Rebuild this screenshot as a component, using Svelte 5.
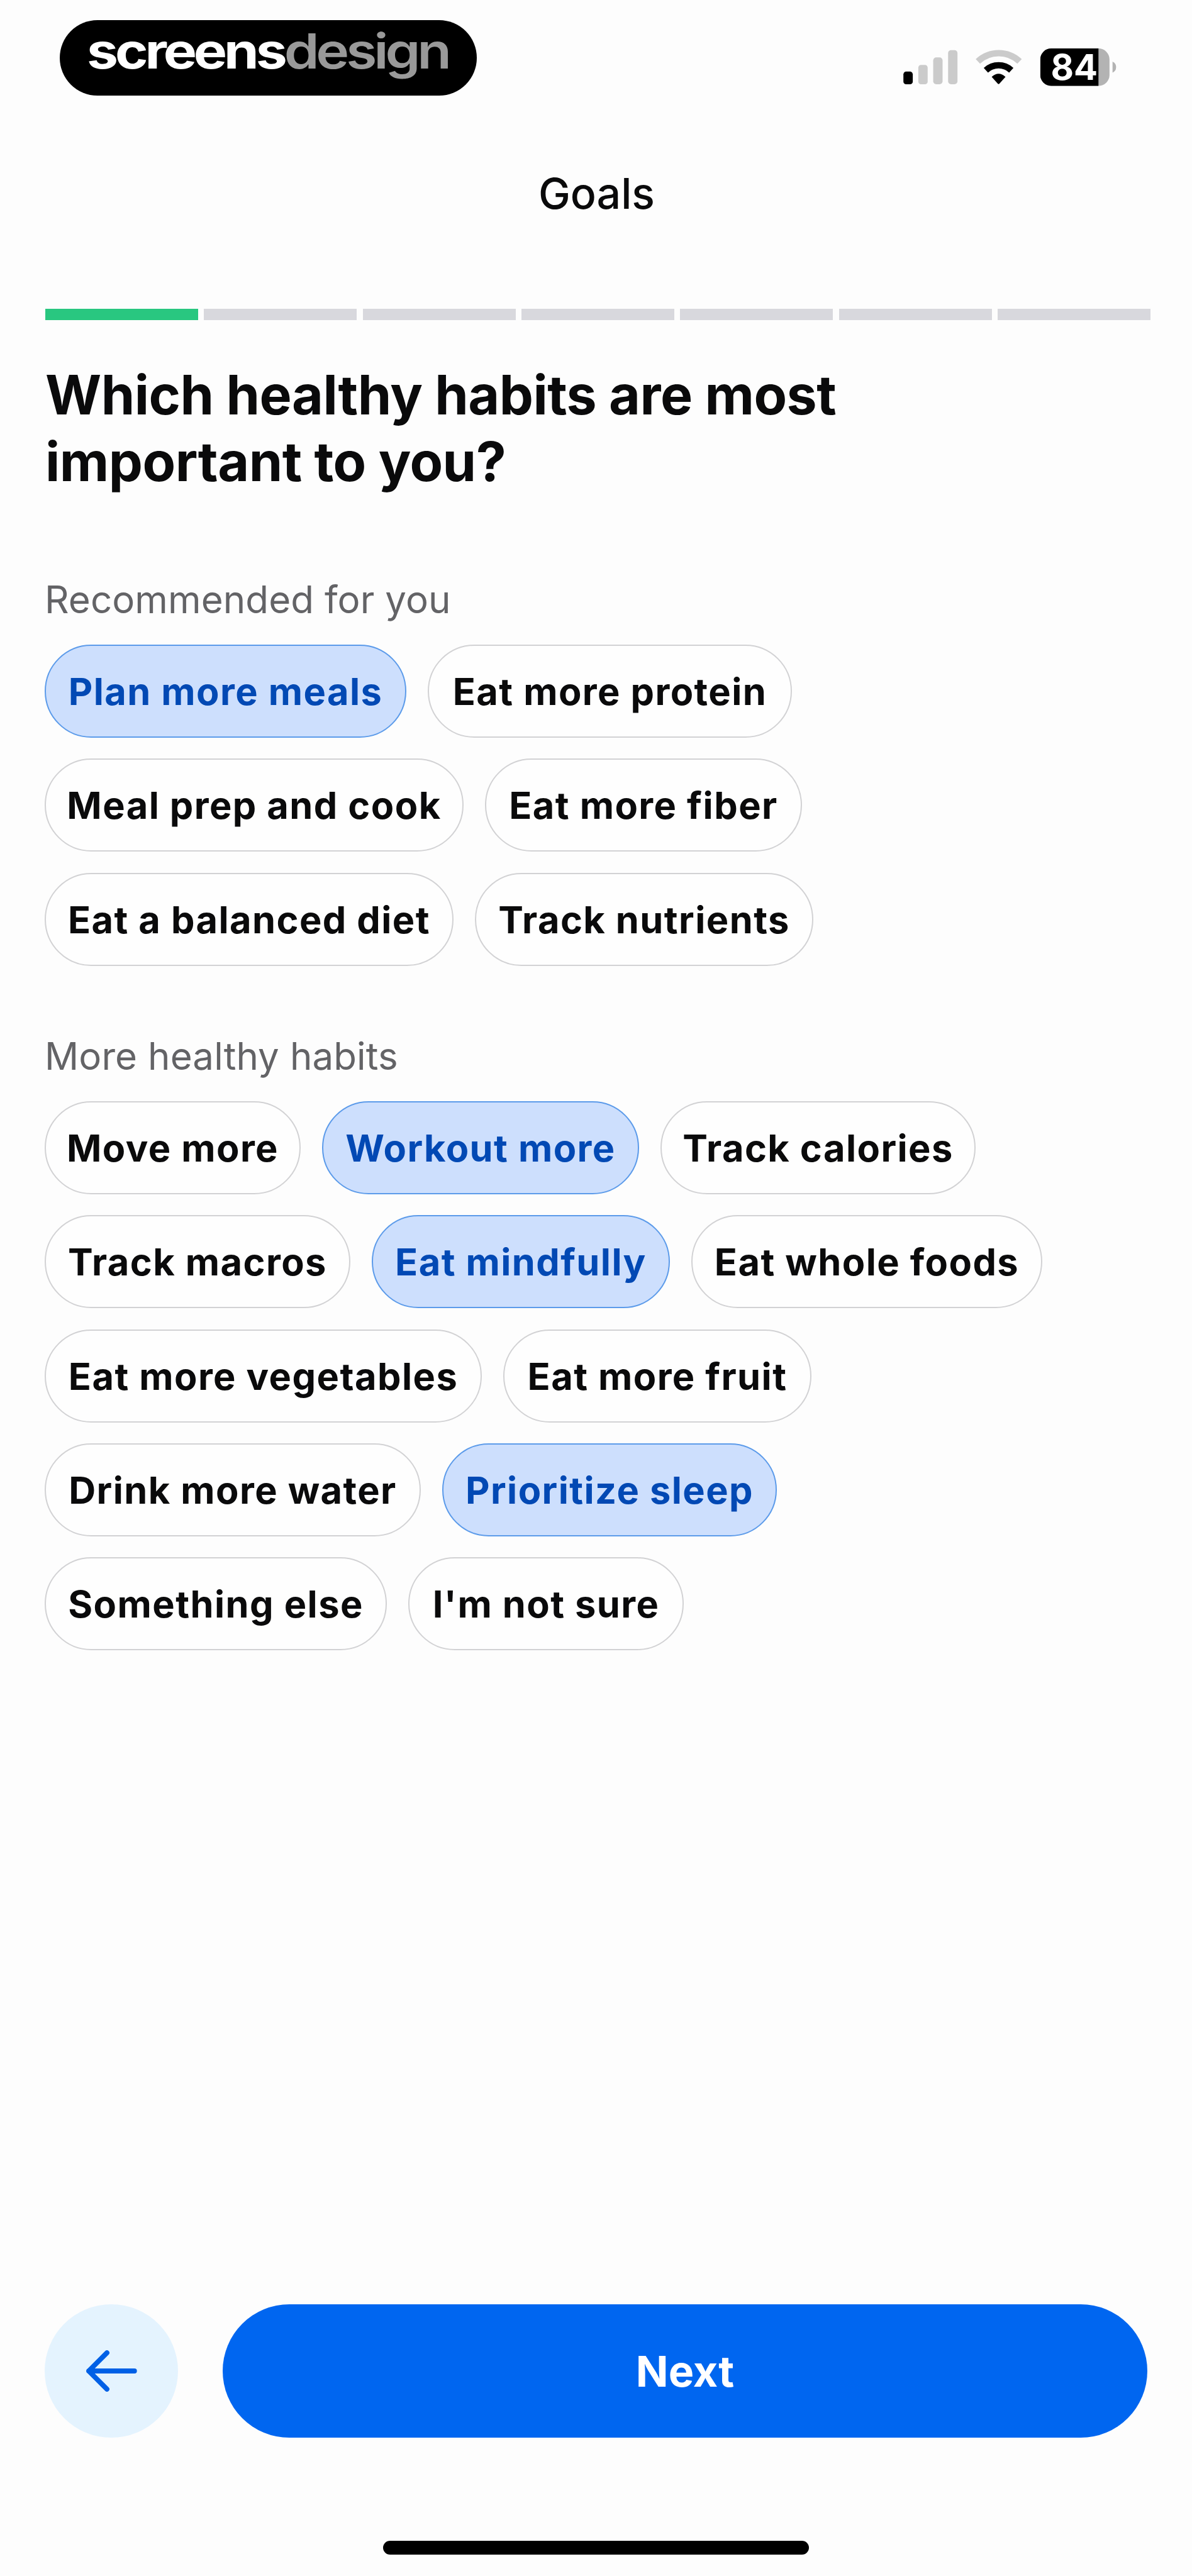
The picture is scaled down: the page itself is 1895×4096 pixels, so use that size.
<script>
  const steps = [true, false, false, false, false, false, false];

  const sections = [
    {
      title: 'Recommended for you',
      rows: [
        [{ label: 'Plan more meals', width: 575, on: true }, { label: 'Eat more protein', width: 579 }],
        [{ label: 'Meal prep and cook', width: 666 }, { label: 'Eat more fiber', width: 504 }],
        [{ label: 'Eat a balanced diet', width: 650 }, { label: 'Track nutrients', width: 538 }]
      ]
    },
    {
      title: 'More healthy habits',
      rows: [
        [
          { label: 'Move more', width: 407 },
          { label: 'Workout more', width: 504, on: true },
          { label: 'Track calories', width: 501 }
        ],
        [
          { label: 'Track macros', width: 486 },
          { label: 'Eat mindfully', width: 474, on: true },
          { label: 'Eat whole foods', width: 558 }
        ],
        [{ label: 'Eat more vegetables', width: 695 }, { label: 'Eat more fruit', width: 490 }],
        [{ label: 'Drink more water', width: 598 }, { label: 'Prioritize sleep', width: 532, on: true }],
        [{ label: 'Something else', width: 544 }, { label: "I'm not sure", width: 438 }]
      ]
    }
  ];
</script>

<main class="screen">
  <header class="status">
    <div class="brand"><div class="wordmark">screens<span class="dim">design</span></div></div>
    <svg class="icons" viewBox="1630 80 400 84" aria-hidden="true">
      <rect x="1637" y="130" width="17" height="23" rx="5" fill="#000" />
      <g fill="#cbcbcb">
        <rect x="1664" y="118" width="17" height="35" rx="5" />
        <rect x="1691" y="104.3" width="17" height="48.7" rx="5.5" />
        <rect x="1718" y="91" width="17" height="62" rx="5.5" />
      </g>
      <path d="M1772 111.5 A55 55 0 0 1 1847.5 111.5" fill="none" stroke="#cbcbcb" stroke-width="11.5" />
      <path d="M1786.5 127.5 A34 34 0 0 1 1832.5 127.5" fill="none" stroke="#000" stroke-width="11.5" />
      <path d="M1797 139.5 Q1809.5 128.5 1822 139.5 L1811 151.8 Q1809.5 153.3 1808 151.8 Z" fill="#000" />
      <clipPath id="cell"><rect x="1885" y="88" width="125.5" height="68" rx="20" /></clipPath>
      <g clip-path="url(#cell)">
        <rect x="1885" y="88" width="126" height="68" fill="#b3b3b3" />
        <rect x="1885" y="88" width="105.5" height="68" fill="#000" />
      </g>
      <path d="M2016 112 Q2022.5 115 2022.5 122 Q2022.5 129 2016 132 Z" fill="#b3b3b3" />
      <text x="1946.5" y="145.5" class="level" text-anchor="middle" textLength="85" lengthAdjust="spacingAndGlyphs">84</text>
    </svg>
  </header>

  <h1 class="title">Goals</h1>

  <div class="progress">
    {#each steps as done}
      <div class="step" class:done></div>
    {/each}
  </div>

  <h2 class="question">Which healthy habits are most<br />important to you?</h2>

  {#each sections as section}
    <section class="group">
      <h3 class="label">{section.title}</h3>
      <div class="rows">
        {#each section.rows as row}
          <div class="row">
            {#each row as chip}
              <button class="chip" class:on={chip.on} style:width="{chip.width}px">{chip.label}</button>
            {/each}
          </div>
        {/each}
      </div>
    </section>
  {/each}

  <footer class="actions">
    <button class="back" aria-label="Back">
      <svg viewBox="0 0 96 80" aria-hidden="true">
        <path d="M40 7 L7 40 L40 73 M7 40 H90" />
      </svg>
    </button>
    <button class="next">Next</button>
  </footer>
  <div class="home"></div>
</main>

<style>
  :global(body) {
    background: #fdfdfd;
  }
  .screen {
    box-sizing: border-box;
    width: 1895px;
    height: 4096px;
    overflow: hidden;
    display: flex;
    flex-direction: column;
    background: #fdfdfd;
    color: #0a0a0b;
    font-family: Inter, 'Liberation Sans', sans-serif;
  }
  h1, h2, h3 {
    margin: 0;
  }
  button {
    font: inherit;
    border: 0;
    margin: 0;
    padding: 0;
  }
  .status {
    height: 207px;
    box-sizing: border-box;
    padding: 32px 114px 0 95px;
    display: flex;
    justify-content: space-between;
    align-items: flex-start;
  }
  .brand {
    box-sizing: border-box;
    width: 663px;
    height: 120px;
    padding-left: 43px;
    border-radius: 60px;
    background: #000;
    color: #fff;
  }
  .wordmark {
    font-size: 77px;
    font-weight: 700;
    line-height: 98px;
    letter-spacing: -4.4px;
    white-space: nowrap;
    transform: scaleX(1.162);
    transform-origin: left center;
  }
  .dim {
    color: #999;
    font-weight: 600;
  }
  .icons {
    width: 351px;
    height: 73.7px;
    margin-top: 38px;
  }
  .level {
    font-size: 65px;
    font-weight: 700;
    fill: #fff;
  }
  .title {
    height: 200px;
    line-height: 200px;
    padding-left: 2px;
    text-align: center;
    font-size: 68px;
    font-weight: 500;
  }
  .progress {
    display: flex;
    gap: 9.2px;
    margin: 84px 66px 0 72px;
    height: 18px;
  }
  .step {
    flex: 1;
    background: #d8d8dd;
  }
  .step.done {
    background: #29c780;
  }
  .question {
    margin: 66px 0 0 72px;
    font-size: 86px;
    line-height: 106px;
    font-weight: 700;
    letter-spacing: -0.52px;
  }
  .group {
    padding-left: 71px;
  }
  .label {
    height: 80px;
    line-height: 80px;
    margin: 126px 0 32px 0;
    font-size: 60px;
    font-weight: 400;
    letter-spacing: 0.1px;
    color: #636366;
  }
  .group + .group .label {
    margin-top: 103px;
  }
  .rows {
    display: flex;
    flex-direction: column;
    gap: 33.4px;
  }
  .row {
    display: flex;
    gap: 34px;
  }
  .chip {
    box-sizing: border-box;
    height: 148px;
    border: 2.5px solid #d2d2d4;
    border-radius: 74px;
    background: #fefefe;
    color: #0a0a0b;
    font-size: 59.5px;
    font-weight: 700;
    letter-spacing: 1.45px;
    text-align: center;
    white-space: nowrap;
  }
  .chip.on {
    background: #cddffd;
    border-color: #5c9bea;
    color: #0249b4;
  }
  .actions {
    display: flex;
    gap: 71px;
    margin: auto 71px 0 71px;
    height: 212px;
  }
  .back {
    width: 212px;
    border-radius: 50%;
    background: #e4f3fe;
    display: flex;
    align-items: center;
    justify-content: center;
  }
  .back svg {
    width: 84px;
    height: 70px;
    fill: none;
    stroke: #0060e6;
    stroke-width: 9;
    stroke-linecap: round;
    stroke-linejoin: round;
  }
  .next {
    flex: 1;
    border-radius: 106px;
    background: #0066f0;
    color: #fff;
    font-size: 68px;
    font-weight: 700;
  }
  .home {
    width: 677px;
    height: 22px;
    border-radius: 11px;
    background: #000;
    margin: 164px auto 34px;
  }
</style>
